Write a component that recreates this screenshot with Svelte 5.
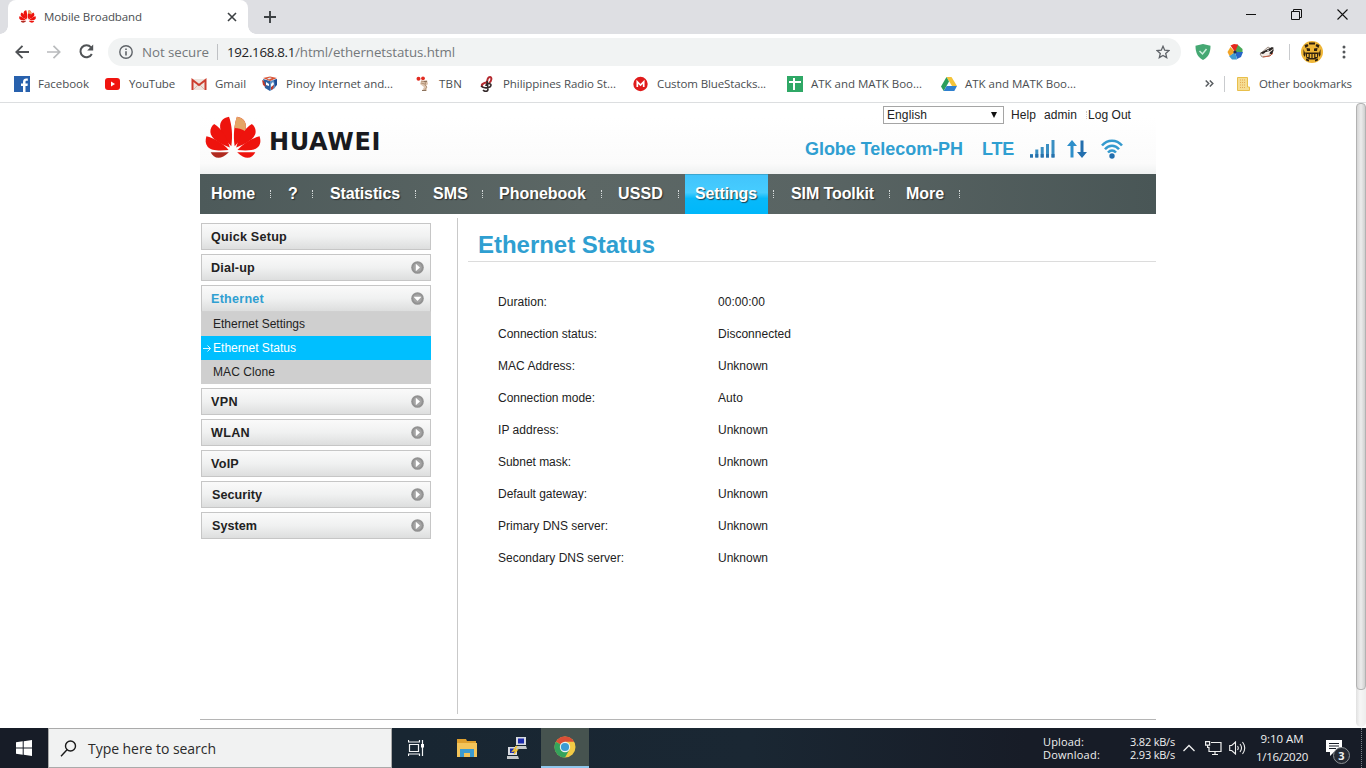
<script>
  // Spreads letters so a label takes exactly the given width.
  function fit(node, width) {
    const natural = node.getBoundingClientRect().width;
    const count = node.textContent.length;
    node.style.letterSpacing = (width - natural) / count + 'px';
  }

  const bookmarks = [
    { icon: 'facebook', label: 'Facebook', box: 51, w: 51 },
    { icon: 'youtube', label: 'YouTube', box: 46, w: 46 },
    { icon: 'gmail', label: 'Gmail', box: 31, w: 31 },
    { icon: 'pinoy', label: 'Pinoy Internet and...', box: 113, w: 107 },
    { icon: 'tbn', label: 'TBN', box: 24, w: 23 },
    { icon: 'radio', label: 'Philippines Radio St...', box: 114, w: 113 },
    { icon: 'mega', label: 'Custom BlueStacks...', box: 114, w: 109 },
    { icon: 'sheet', label: 'ATK and MATK Boo...', box: 114, w: 111 },
    { icon: 'drive', label: 'ATK and MATK Boo...', box: 114, w: 111 }
  ];

  const nav = [
    { label: 'Home', cell: 71, pad: 11, w: 44 },
    { label: '?', cell: 42, pad: 17, w: 10 },
    { label: 'Statistics', cell: 103, pad: 17, w: 70 },
    { label: 'SMS', cell: 67, pad: 17, w: 35 },
    { label: 'Phonebook', cell: 119, pad: 16, w: 87 },
    { label: 'USSD', cell: 77, pad: 16, w: 45 },
    { label: 'Settings', cell: 95, pad: 16, w: 62, active: true },
    { label: 'SIM Toolkit', cell: 116, pad: 17, w: 83 },
    { label: 'More', cell: 70, pad: 16, w: 38 }
  ];

  const menu = [
    { label: 'Quick Setup', w: 76 },
    { label: 'Dial-up', w: 44, arrow: true },
    {
      label: 'Ethernet', w: 53, arrow: true, open: true,
      sub: [
        { label: 'Ethernet Settings', w: 92 },
        { label: 'Ethernet Status', w: 83, active: true },
        { label: 'MAC Clone', w: 62 }
      ]
    },
    { label: 'VPN', w: 27, arrow: true },
    { label: 'WLAN', w: 39, arrow: true },
    { label: 'VoIP', w: 28, arrow: true },
    { label: 'Security', w: 50, arrow: true, shift: true },
    { label: 'System', w: 45, arrow: true, shift: true }
  ];

  const rows = [
    ['Duration:', 49, '00:00:00', 47],
    ['Connection status:', 99, 'Disconnected', 73],
    ['MAC Address:', 77, 'Unknown', 50],
    ['Connection mode:', 97, 'Auto', 25],
    ['IP address:', 61, 'Unknown', 50],
    ['Subnet mask:', 73, 'Unknown', 50],
    ['Default gateway:', 89, 'Unknown', 50],
    ['Primary DNS server:', 110, 'Unknown', 50],
    ['Secondary DNS server:', 126, 'Unknown', 50]
  ];
</script>

{#snippet flower(size)}
  <svg width={size} height={size * 0.78} viewBox="0 0 56 44">
    <g fill="#ee130d">
      <path d="M26.300 30.500C20 24 14.500 16 15 9.500 15.300 4.500 19 1.500 24 .7c2.800 8 4 19 2.300 29.800z" />
      <path d="M29.700 30.500C36 24 41.500 16 41 9.500 40.700 4.500 37 1.500 32 .7c-2.800 8-4 19-2.300 29.800z" />
      <path d="M24.800 31.800C15 27.500 5.500 23 5.200 16c-.1-3.500 1.300-6 3.800-8 7 4.500 13.300 13 15.800 23.800z" />
      <path d="M31.200 31.800C41 27.500 50.500 23 50.800 16c.1-3.500-1.300-6-3.800-8-7 4.500-13.300 13-15.800 23.800z" />
      <path d="M23.500 34.300C14 35.300 6 35 2.500 31 0 28 0 24.500 1.200 20.500 9 22.500 17.500 27 23.500 34.300z" />
      <path d="M32.500 34.300C42 35.300 50 35 53.500 31c2.500-3 2.500-6.500 1.300-10.500C47 22.500 38.500 27 32.500 34.300z" />
      <path d="M23.800 36.500H5.500c3 5.800 9.500 9 18.300 0z" fill="#b02a20" />
      <path d="M32.200 36.500h18.300c-3 5.800-9.500 9-18.300 0z" />
    </g>
    <path d="M29.500 12c.3-4 1.200-8 2.500-11.300 5 .8 8.700 3.800 9 8.800.1 2-.2 3.500-1 5.500-3-2-7-3-10.500-3z" fill="#e4a565" />
  </svg>
{/snippet}

{#snippet bookmarkIcon(name)}
  <svg width="16" height="16" viewBox="0 0 16 16">
    {#if name === 'facebook'}
      <path fill="#2861ad" d="M0 0h16v16H0z" />
      <path fill="#fff" d="M9 16V10H7V7.500h2V6c0-2.400 1.400-3.500 3.300-3.500h1.500v2.300h-1.200c-.8 0-1.100.5-1.100 1.200v1.500h2.300L13.500 10h-2v6z" />
    {:else if name === 'youtube'}
      <rect x="0" y="2" width="15" height="12" rx="3" fill="#f0140f" />
      <path fill="#fff" d="M6 5.500v5L10 8z" />
    {:else if name === 'gmail'}
      <path fill="#eee5df" d="M1 3h14v11H1z" />
      <path fill="none" stroke="#d9a89a" stroke-width=".8" d="M3 13l4-4M13 13L9 9" />
      <path fill="none" stroke="#cc3d2e" stroke-width="2" d="M1.500 14V4L8 9l6.500-5v10" />
    {:else if name === 'pinoy'}
      <path fill="#2d5f9e" d="M1 3l7 2v10l-5-3z" />
      <path fill="#5c8fc6" d="M15 3L8 5v10l5-3z" />
      <path fill="#d95436" d="M1 2l7-1.500L15 2 8 5z" />
      <path fill="#dce9f3" d="M5 2.500l3-1 2 .5-3 1.500z" />
      <path fill="#fff" d="M4 6l3 2v2L4 9zM11 6l1 2-3 4V8z" />
      <path fill="#bf3a2b" d="M0 4l2 1 2 6-3-2zM9 11l3-2-1 4-2 1z" />
      <path fill="#1f4d94" d="M12 4l3-1v6l-2 2z" />
    {:else if name === 'tbn'}
      <circle cx="3.500" cy="2.800" r="2" fill="#e22b20" /><circle cx="8" cy="2.300" r="1.900" fill="#e22b20" />
      <path fill="#dcc4ae" d="M6 5l6-1 1 4-2 2 1 5H7l2-4-4-3z" />
      <path fill="none" stroke="#b39378" stroke-width="1" d="M6 5l5 1-1 3 2 2-3 4M6 7l4 1" />
      <path fill="#8c735e" d="M9 5h3v1H9zM7 14h4v1H7z" />
    {:else if name === 'radio'}
      <path fill="none" stroke="#b42a30" stroke-width="2" d="M10 7c3-2 3-6 1-6S8 4 8 8M9 6C4 7 1 9 4 11" />
      <path fill="none" stroke="#33282a" stroke-width="1.600" d="M2 10c3 3 10 2 10-1 0-2-5-2-5 1M8 5l1 8c0 3-3 3-5 1" />
    {:else if name === 'mega'}
      <circle cx="7.500" cy="8" r="7.200" fill="#e01b1b" />
      <path fill="none" stroke="#fff" stroke-width="1.700" d="M4.300 11V5.800L7.500 9l3.200-3.200V11" />
    {:else if name === 'sheet'}
      <path fill="#2fa866" d="M0 0h16v16H0z" />
      <path fill="#fff" d="M2 5h12v2H8v7H6V7H2zM6 2h2v3H6z" />
    {:else}
      <path fill="#f4c43a" d="M5.500 1h5L16 10h-5z" />
      <path fill="#2c9e5c" d="M5.500 1L0 10.500 2.700 15 8 5.500z" />
      <path fill="#2f80cf" d="M5.600 10H16l-2.700 5H2.700z" />
    {/if}
  </svg>
{/snippet}

<div class="screen">
  <div class="tabs">
    <div class="tab">
      {@render flower(17)}
      <span class="tabtitle"><span class="f" use:fit={98}>Mobile Broadband</span></span>
      <svg width="10" height="10" viewBox="0 0 10 10"><path d="M1 1l8 8M9 1L1 9" stroke="#3c4043" stroke-width="1.600" /></svg>
    </div>
    <svg class="plus" width="12" height="12" viewBox="0 0 12 12"><path d="M6 0v12M0 6h12" stroke="#3c4043" stroke-width="1.900" /></svg>
    <div class="winbtns">
      <svg width="10" height="11" viewBox="0 0 10 11"><path d="M0 5.500h10" stroke="#111" /></svg>
      <svg width="11" height="11" viewBox="0 0 11 11" fill="none" stroke="#111"><path d="M.5 2.500h8v8h-8zM2.500 2V.5h8v8H9" /></svg>
      <svg width="11" height="11" viewBox="0 0 11 11"><path d="M.5.5l10 10M10.500.5l-10 10" stroke="#111" stroke-width="1.100" /></svg>
    </div>
  </div>

  <div class="toolbar">
    <div class="navbtns">
      <svg width="14" height="14" viewBox="0 0 14 14" fill="none" stroke="#505356" stroke-width="1.900"><path d="M14 7H1.500M7.500.8L1.300 7l6.200 6.200" /></svg>
      <svg width="14" height="14" viewBox="0 0 14 14" fill="none" stroke="#b9bbbd" stroke-width="1.700"><path d="M0 7h12.500M6.500.8L12.700 7l-6.200 6.200" /></svg>
      <svg width="15" height="15" viewBox="0 0 15 15"><path d="M12.800 10A6 6 0 1 1 12 3.300" fill="none" stroke="#505356" stroke-width="2" /><path d="M14.200.5v6H8.200z" fill="#505356" /></svg>
    </div>
    <div class="omnibox">
      <svg width="14" height="14" viewBox="0 0 14 14"><circle cx="7" cy="7" r="6.200" fill="none" stroke="#5f6368" stroke-width="1.400" /><path d="M6.200 6.200h1.600v4.300H6.200zM6.200 3.500h1.600v1.600H6.200z" fill="#5f6368" /></svg>
      <span class="notsecure"><span class="f" use:fit={67}>Not secure</span></span>
      <i class="omsep"></i>
      <span class="url"><span class="f dark" use:fit={68}>192.168.8.1</span><span class="f" use:fit={160}>/html/ethernetstatus.html</span></span>
      <svg class="star" width="14" height="14" viewBox="0 0 14 14"><path d="M7 1.300l1.700 3.900 4.200.4-3.200 2.800 1 4.200L7 10.400l-3.700 2.200 1-4.200L1.100 5.600l4.200-.4z" fill="none" stroke="#5f6368" stroke-width="1.300" /></svg>
    </div>
    <div class="ext">
      <svg width="16" height="16" viewBox="0 0 16 16"><path d="M8 0l7.500 1.700c0 6-1.500 11-7.500 14.300C2 12.700.5 7.700.5 1.700z" fill="#45a873" /><path d="M4.500 7l3 3 4-5" fill="none" stroke="#cdeedb" stroke-width="1.500" /></svg>
      <svg width="16" height="16" viewBox="0 0 16 16"><path d="M8 8L3.500 1.500 7 0l4 .5V5z" fill="#e5281c" /><path d="M8 8l3-7 4.500 4v3z" fill="#48a857" /><path d="M8 8h8l-2 5-4 2z" fill="#2565c7" /><path d="M8 8l2 7.500H5L2 12z" fill="#3f9bd0" /><path d="M8 8l-5.500 4L.5 8l3-5z" fill="#f2a427" /><circle cx="8" cy="8" r="1.600" fill="#1c2f50" /></svg>
      <svg width="16" height="16" viewBox="0 0 16 16"><path d="M1 10l8-7 5 3-4 6-7 1z" fill="#f1e9e3" stroke="#87766c" stroke-width=".8" /><path d="M1 9l6-3 6-3 2 1-4 3-4 1-3 2zM10 9l5-4-2 6z" fill="#2b2624" /><path d="M8 7l2-1M6 9l5-1" stroke="#fff" stroke-width=".8" /><path d="M4 13l7-1 3-3" fill="none" stroke="#c55d43" /></svg>
      <i class="extsep"></i>
      <svg class="avatar" width="22" height="22" viewBox="0 0 22 22"><circle cx="11" cy="11" r="11" fill="#efb637" /><path d="M8 1.500h6v2H8zM3.500 4l3-1 1 2-3 2zM18.500 4l-3-1-1 2 3 2zM5 17.500l3 1v2l-3-1zM17 17.500l-3 1v2l3-1z" fill="#30210f" /><path d="M5.500 7l3.500.5V10H6zM16.500 7l-3.500.5V10h3zM2.500 8L4 12v4l-1.500-2zM19.500 8L18 12v4l1.500-2z" fill="#30210f" /><path d="M4 11.500h14l-1.500 5.500-3 1.500h-5l-3-1.500z" fill="#30210f" /><path d="M6 13h1.600v3H6zM8.800 13h1.600v4H8.800zM11.600 13h1.600v4h-1.600zM14.400 13H16v3h-1.600z" fill="#efb637" /></svg>
      <svg class="dots" width="4" height="14" viewBox="0 0 4 14" fill="#54575a"><circle cx="2" cy="2" r="1.500" /><circle cx="2" cy="7" r="1.500" /><circle cx="2" cy="12" r="1.500" /></svg>
    </div>
  </div>

  <div class="bookmarks">
    {#each bookmarks as b}
      {@render bookmarkIcon(b.icon)}
      <span class="bm" style:width="{b.box}px"><span class="f" use:fit={b.w}>{b.label}</span></span>
    {/each}
    <svg class="more" width="9" height="7" viewBox="0 0 9 7" fill="none" stroke="#5a5e62" stroke-width="1.500"><path d="M.7.500l3 3-3 3M4.800.500l3 3-3 3" /></svg>
    <i class="bmsep"></i>
    <svg class="folder" width="13" height="14" viewBox="0 0 13 14"><path d="M.500.500h10V10h2v3.500H.500z" fill="#f6dd92" stroke="#e8bf4b" /><path d="M3 3h5M3 5.500h5M3 8h5M3 10.500h6" stroke="#e4a955" stroke-dasharray="1 1" /></svg>
    <span class="f" use:fit={93}>Other bookmarks</span>
  </div>

  <div class="viewport">
    <main>
      <header>
        <div class="brand">
          {@render flower(56)}
          <span class="wordmark"><span class="f" use:fit={112}>HUAWEI</span></span>
        </div>
        <div class="right">
          <div class="links">
            <div class="select"><span class="f" use:fit={40}>English</span><i></i></div>
            <span class="help"><span class="f" use:fit={25}>Help</span></span>
            <span class="admin"><span class="f" use:fit={33}>admin</span></span>
            <i class="dotsep"></i>
            <span class="logout"><span class="f" use:fit={43}>Log Out</span></span>
          </div>
          <div class="status">
            <span class="carrier"><span class="f" use:fit={158}>Globe Telecom-PH</span></span>
            <span class="lte"><span class="f" use:fit={32}>LTE</span></span>
            <svg width="26" height="18" viewBox="0 0 26 18" fill="#3a8fc2"><path d="M0 14h3v3.500H0zM5.300 9.500h3v8h-3zM10.700 7h3v10.500h-3zM16 4h3v13.500h-3z" /><path d="M21.500 0h3v17.500h-3z" /><path d="M0 15h3v2.500H0zM5.300 14h3v3.500h-3zM10.700 14h3v3.500h-3zM16 14h3v3.500h-3zM21.500 14h3v3.500h-3z" fill="#2871ab" /></svg>
            <svg class="updown" width="20" height="18" viewBox="0 0 20 18"><path d="M3.500 17.500V6H0L5 0l5 6H6.500v11.500z" fill="#2e8fca" /><path d="M13.500.500V12H10l5 6 5-6h-3.500V.500z" fill="#236fae" /></svg>
            <svg class="wifi" width="22" height="20" viewBox="0 0 22 20" fill="none" stroke="#349ace" stroke-width="2.500"><path d="M1 6.500C6.500 0 15.500 0 21 6.500M4 10.200c4-4.700 10-4.700 14 0M7 13.500c2.500-2.700 5.500-2.700 8 0" /><circle cx="11" cy="17" r="2.700" fill="#236fae" stroke="none" /></svg>
          </div>
        </div>
      </header>

      <nav>
        {#each nav as n}
          <div class="cell" style:width="{n.cell}px">
            <a class:active={n.active} class:wide={n.pad === 17} class:first={n.pad === 11}><span class="f" use:fit={n.w}>{n.label}</span></a>
            <i></i>
          </div>
        {/each}
      </nav>

      <div class="content">
        <aside>
          {#each menu as m}
            <div class="item">
              <div class="head" class:open={m.open} class:shift={m.shift}>
                <span class="f" use:fit={m.w}>{m.label}</span>
                {#if m.arrow}
                  <svg width="13" height="13" viewBox="0 0 13 13"><circle cx="6.500" cy="6.500" r="6.300" fill="#929292" /><circle cx="6.500" cy="6.500" r="4.300" fill="#a5a5a5" /><path d={m.open ? 'M2.500 4.700h8l-4 4.300z' : 'M4.800 2.700v7.600l4.200-3.800z'} fill="#fff" /></svg>
                {/if}
              </div>
              {#if m.sub}
                {#each m.sub as s}
                  <div class="sub" class:current={s.active}>
                    {#if s.active}
                      <svg width="9" height="7" viewBox="0 0 9 7" fill="none" stroke="#d9f6ff"><path d="M0 3.500h7.500M4.500.500l3 3-3 3" /></svg>
                    {/if}
                    <span class="f" use:fit={s.w}>{s.label}</span>
                  </div>
                {/each}
              {/if}
            </div>
          {/each}
        </aside>
        <section>
          <h1><span class="f" use:fit={177}>Ethernet Status</span></h1>
          <dl>
            {#each rows as [k, kw, v, vw]}
              <dt><span class="f" use:fit={kw}>{k}</span></dt>
              <dd><span class="f" use:fit={vw}>{v}</span></dd>
            {/each}
          </dl>
        </section>
      </div>
    </main>
    <div class="scroll"><div class="thumb"></div></div>
  </div>

  <div class="taskbar">
    <div class="start">
      <svg width="16" height="16" viewBox="0 0 16 16" fill="#fff"><path d="M0 2.300L6.700 1.300v6.200H0zM7.700 1.200L16 0v7.500H7.700zM0 8.500h6.700v6.200L0 13.700zM7.700 8.500H16V16l-8.300-1.200z" /></svg>
    </div>
    <div class="search">
      <svg width="17" height="17" viewBox="0 0 17 17" fill="none" stroke="#1a1a1a" stroke-width="1.400"><circle cx="10.500" cy="6" r="5" /><path d="M7 9.800L1 16.300" /></svg>
      <span class="f" use:fit={128}>Type here to search</span>
    </div>
    <div class="app">
      <svg width="17" height="16" viewBox="0 0 17 16" fill="none" stroke="#f2f4f5" stroke-width="1.200"><path d="M1.500 4.500h9v7h-9zM.500 0v2h11V0M.500 16v-2h11v2M14.500 0v16" /><path d="M13 4h3v3.500h-3z" fill="#fff" stroke="none" /></svg>
    </div>
    <div class="app folderapp">
      <svg width="20" height="18" viewBox="0 0 20 18"><path d="M0 0h9l1 2h9v16H0z" fill="#dfa02e" /><path d="M0 4h20v14H0z" fill="#f3c45a" /><path d="M3 18v-8h14v8h-4v-4H7v4z" fill="#3c9bd0" /></svg>
    </div>
    <div class="app">
      <svg width="20" height="22" viewBox="0 0 20 22"><path d="M9 0h10v8H9zM1 10h9v8H1z" fill="#d7dae0" /><path d="M11 1.500h6v5h-6zM3 11.500h5.500V16H3z" fill="#1d2bab" /><path d="M8 9h11l1 3H9zM0 19h11l1 3H0z" fill="#c6c9ca" /><path d="M10 9l-4 5 4-1-3 4" fill="none" stroke="#f2c330" stroke-width="1.500" /></svg>
    </div>
    <div class="app chrome">
      <svg width="22" height="22" viewBox="0 0 22 22"><circle cx="11" cy="11" r="10.500" fill="#f3cb45" /><path d="M11 11L1.900 5.700A10.500 10.500 0 0 1 20.100 5.800H11z" fill="#db4e36" /><path d="M1.900 5.700A10.500 10.500 0 0 0 11 21.500l4.500-7.900L11 11z" fill="#35a35c" /><circle cx="11" cy="11" r="5.200" fill="#edf3f3" /><circle cx="11" cy="11" r="4.100" fill="#3c9bd3" /></svg>
    </div>
    <div class="tray">
      <div class="net">
        <div><span class="f" use:fit={41}>Upload:</span><span class="f" use:fit={45}>3.82 kB/s</span></div>
        <div><span class="f" use:fit={57}>Download:</span><span class="f" use:fit={45}>2.93 kB/s</span></div>
      </div>
      <svg class="chev" width="12" height="8" viewBox="0 0 12 8" fill="none" stroke="#eee" stroke-width="1.300"><path d="M.500 7L6 1.500 11.500 7" /></svg>
      <svg class="pc" width="17" height="15" viewBox="0 0 17 15" fill="none" stroke="#eee" stroke-width="1.200"><path d="M6 1.500h10v9H4V6M7 13.500h6M10 10.500v3M.600.700h4v3.500h-4zM2.600 4v2.500H4" /></svg>
      <svg class="vol" width="17" height="14" viewBox="0 0 17 14" fill="none" stroke="#eee" stroke-width="1.100"><path d="M.700 4.500h2L6.500 1v12L2.700 9.500h-2zM8.500 5c1 1.300 1 2.700 0 4M11 3c2 2.600 2 5.400 0 8M13.500 1c3 4 3 8 0 12" /></svg>
      <div class="clock"><span class="f" use:fit={43}>9:10 AM</span><span class="f" use:fit={52}>1/16/2020</span></div>
      <div class="notify">
        <svg width="16" height="16" viewBox="0 0 16 16"><path d="M0 0h16v12H8l-4 4v-4H0z" fill="#fff" /><path d="M3 3.500h10M3 6h10M3 8.500h7" stroke="#171c26" /></svg>
        <b>3</b>
      </div>
      <i class="peek"></i>
    </div>
  </div>
</div>

<style>
  :global(body) { margin: 0; overflow: hidden; }
  .screen { width: 1366px; height: 768px; display: flex; flex-direction: column; background: #fff; font: 12px "Open Sans", "Noto Sans", sans-serif; color: #4a4e51; overflow: hidden; }
  .screen :global(*) { box-sizing: border-box; }
  svg { flex: none; display: block; }
  .f { display: inline-block; white-space: pre; flex: none; }
  i { display: block; flex: none; }

  .tabs { height: 34px; background: #dedfe3; display: flex; align-items: flex-start; padding-left: 8px; }
  .tab { width: 240px; height: 34px; background: #fff; border-radius: 8px 8px 0 0; display: flex; align-items: center; padding: 0 11px; font-size: 11.500px; position: relative; }
  .tab::before, .tab::after { content: ""; position: absolute; bottom: 0; width: 8px; height: 8px; }
  .tab::before { left: -8px; background: radial-gradient(circle at 0 0, transparent 7.500px, #fff 8px); }
  .tab::after { right: -8px; background: radial-gradient(circle at 100% 0, transparent 7.500px, #fff 8px); }
  .tabtitle { margin-left: 8px; flex: 1; padding-bottom: 2px; }
  .plus { margin: 11px 0 0 16px; }
  .winbtns { margin: 9px 18px 0 auto; display: flex; gap: 35px; }

  .toolbar { height: 35px; display: flex; align-items: center; font-size: 13.300px; }
  .navbtns { display: flex; align-items: center; gap: 18px; padding-left: 15px; width: 108px; }
  .omnibox { width: 1073px; height: 28px; margin-top: 1px; border-radius: 14px; background: #f1f3f3; display: flex; align-items: center; padding-left: 11px; color: #74787b; }
  .notsecure { margin-left: 9px; width: 75px; }
  .omsep { width: 1px; height: 16px; background: #bfc1c4; margin-right: 9px; }
  .url { display: flex; flex: 1; }
  .dark { color: #202124; }
  .star { margin-right: 11px; }
  .ext { display: flex; align-items: center; margin: 1px 0 0 14px; gap: 16px; }
  .extsep { width: 1px; height: 16px; background: #c9cbce; margin-left: -2px; }
  .avatar { margin-left: -5px; }
  .dots { margin-left: 3px; }

  .bookmarks { height: 34px; border-bottom: 1px solid #dcdee0; display: flex; align-items: center; padding: 0 14px 4px; font-size: 11.500px; }
  .bm { margin: 0 16px 0 8px; flex: none; }
  .more { margin-left: 110px; }
  .bmsep { width: 1px; height: 16px; margin: 0 12px 0 10px; background: #c9cbce; }
  .folder { margin-right: 9px; }

  .viewport { height: 625px; display: flex; justify-content: space-between; padding-left: 200px; font-family: "Liberation Sans", Arial, sans-serif; color: #222; }
  main { width: 956px; height: 617px; border-bottom: 1px solid #b5b5b5; display: flex; flex-direction: column; }
  header { height: 71px; display: flex; justify-content: space-between; background: linear-gradient(#fff 20%, #fbfbfb 85%, #eff1f1); }
  .brand { display: flex; padding: 13px 0 0 5px; }
  .wordmark { margin: 11px 0 0 8px; font: 700 24px/30px "DejaVu Sans", sans-serif; color: #191a20; }
  .right { width: 273px; margin-top: 3px; }
  .links { display: flex; align-items: center; height: 18px; font-size: 12px; }
  .select { width: 121px; height: 18px; border: 1px solid #a5a5a5; background: #fff; display: flex; align-items: center; justify-content: space-between; padding: 0 6px 0 3px; }
  .select i { border: 3.500px solid transparent; border-top: 6px solid #111; border-bottom: 0; }
  .help { margin-left: 7px; width: 33px; }
  .admin { width: 42px; }
  .dotsep { height: 8px; border-left: 1px dotted #ccc; margin-right: 1px; }
  .status { display: flex; align-items: center; margin: 15px 0 0 -78px; height: 20px; font-size: 18px; font-weight: 700; color: #309fd1; }
  .carrier { width: 177px; }
  .lte { width: 48px; }
  .updown { margin-left: 11px; }
  .wifi { margin-left: 14px; }

  nav { height: 40px; flex: none; background: linear-gradient(90deg, #4d5a5a, #5c6765 40%, #596463 65%, #495656); display: flex; font-size: 16px; font-weight: 700; color: #fff; text-shadow: 1px 1px 1px #222c; }
  .cell { display: flex; align-items: center; justify-content: space-between; }
  .cell a { padding-left: 16px; }
  .cell a.wide { padding-left: 17px; }
  .cell a.first { padding-left: 11px; }
  .cell a.active { height: 40px; width: 83px; margin-left: 6px; padding: 10px 0 0 10px; background: linear-gradient(#42c4fb, #46cdff 45%, #08b9fa 60%, #00b7fa); border-top: 1px solid #3ba6cf; }
  .cell i { height: 8px; border-left: 1px dotted #d5dada; }

  .content { display: flex; padding-top: 4px; }
  aside { width: 258px; height: 496px; border-right: 1px solid #c9c9c9; padding: 5px 0 0 1px; display: flex; flex-direction: column; gap: 4px; }
  .item { width: 230px; }
  .head { height: 27px; border: 1px solid #c6c6c6; background: linear-gradient(#fafafa, #f0f1f1 50%, #dddede); display: flex; align-items: center; justify-content: space-between; padding: 0 6px 0 9px; font-size: 12.600px; font-weight: 700; }
  .shift { padding-left: 10px; }
  .open { color: #309fd1; border-bottom-color: #d0d0d0; }
  .sub { height: 24px; background: #cfcfcf; display: flex; align-items: center; padding-left: 12px; }
  .current { background: #00bfff; color: #fff; padding-left: 2px; }
  .current svg { margin-right: 1px; }
  section { width: 698px; padding-left: 10px; }
  h1 { margin: 0; height: 44px; border-bottom: 1px solid #dcdcdc; padding: 11px 0 0 10px; font-size: 24px; line-height: 32px; color: #2f9fd1; }
  dl { margin: 24px 0 0 30px; display: grid; grid-template-columns: 220px auto; grid-auto-rows: 32px; align-items: center; line-height: 14px; }
  dt, dd { margin: 0; }

  .scroll { width: 10px; height: 624px; background: linear-gradient(90deg, #e0e0e0, #f6f6f6 40%, #ededed); border-radius: 5px; }
  .thumb { height: 587px; border: 1px solid #b2b2b2; border-radius: 4px; background: linear-gradient(90deg, #d5d5d5, #ececec 50%, #cfcfcf); }

  .taskbar { height: 40px; background: linear-gradient(90deg, #182632 30%, #1a2733 55%, #171c27 75%); display: flex; color: #f0f0f0; }
  .start { width: 48px; background: #171c27; display: flex; align-items: center; justify-content: center; }
  .search { width: 344px; background: #f1f2f2; border: 1px solid #aaa; display: flex; align-items: center; padding-left: 11px; gap: 11px; font-size: 14px; color: #2b2b2b; }
  .app { width: 49px; display: flex; align-items: center; justify-content: center; }
  .folderapp { width: 51px; }
  .chrome { width: 48px; background: #46534f; border-bottom: 2px solid #8fc7ed; }
  .tray { margin-left: auto; display: flex; align-items: center; font-size: 11px; }
  .net { width: 132px; font-size: 11px; line-height: 13px; padding-bottom: 1px; }
  .net div { display: flex; justify-content: space-between; }
  .chev { margin-left: 8px; }
  .pc { margin-left: 10px; }
  .vol { margin-left: 7px; }
  .clock { width: 52px; margin-left: 10px; display: flex; flex-direction: column; align-items: center; line-height: 18px; font-size: 11.500px; }
  .notify { margin-left: 18px; width: 24px; height: 40px; padding-top: 12px; position: relative; }
  .notify b { position: absolute; left: 7px; top: 19px; width: 17px; height: 17px; border: 1px solid #8c9094; border-radius: 50%; background: #252a33; text-align: center; font-size: 11px; line-height: 15px; }
  .peek { width: 1px; height: 40px; margin: 0 4px 0 11px; border-left: 1px dotted #788087; }
</style>
